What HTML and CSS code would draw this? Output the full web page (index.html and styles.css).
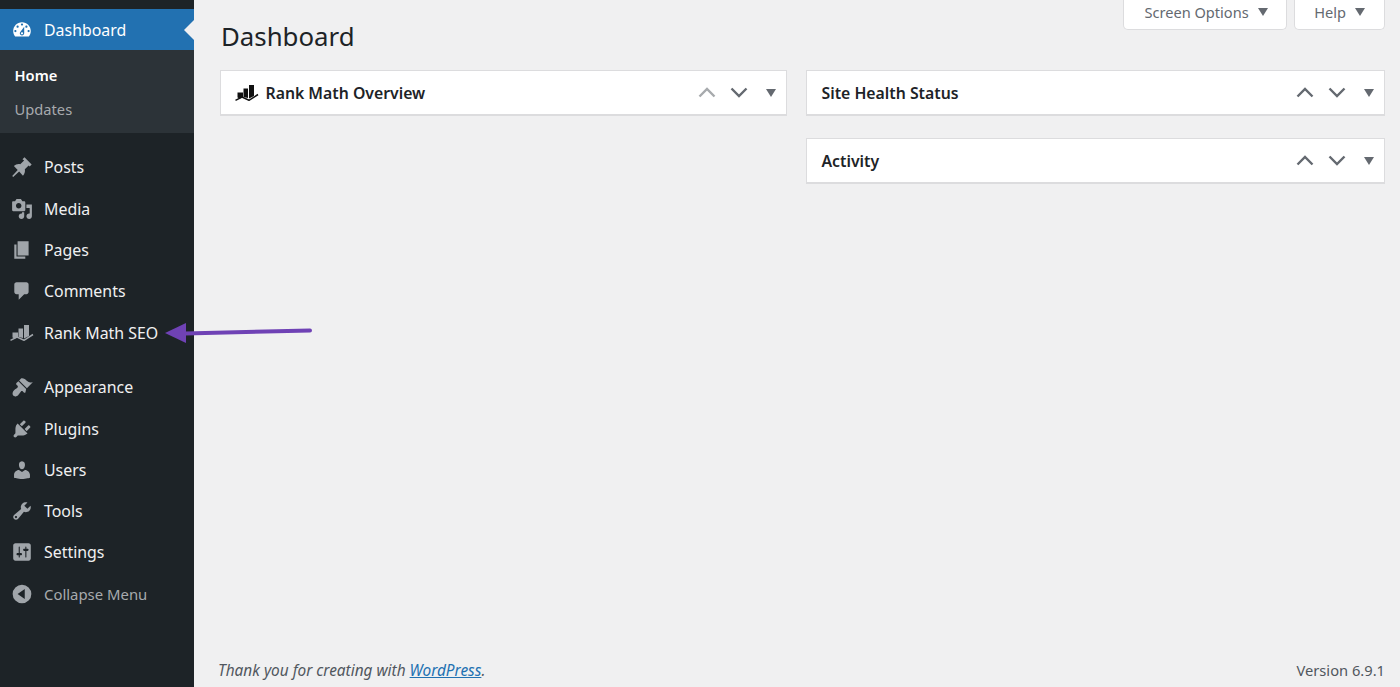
FILE: index.html
```html
<!DOCTYPE html>
<html lang="en">
<head>
<meta charset="utf-8">
<title>Dashboard</title>
<link rel="stylesheet" href="styles.css">
</head>
<body>
<div class="page">
  <aside class="sidebar">
    <nav class="menu">
      <a class="item current"><svg class="ic" viewBox="0 0 20 20"><path fill-rule="evenodd" d="M3.76 16h12.48c1.1-1.37 1.76-3.11 1.76-5 0-4.42-3.58-8-8-8s-8 3.58-8 8c0 1.89.66 3.63 1.76 5zM10 4c.55 0 1 .45 1 1s-.45 1-1 1-1-.45-1-1 .45-1 1-1zM6 6c.55 0 1 .45 1 1s-.45 1-1 1-1-.45-1-1 .45-1 1-1zm8 0c.55 0 1 .45 1 1s-.45 1-1 1-1-.45-1-1 .45-1 1-1zm-5.37 5.55L12 7v6c0 1.1-.9 2-2 2s-2-.9-2-2c0-.57.24-1.08.63-1.45zM4 10c.55 0 1 .45 1 1s-.45 1-1 1-1-.45-1-1 .45-1 1-1zm12 0c.55 0 1 .45 1 1s-.45 1-1 1-1-.45-1-1 .45-1 1-1zm-5 3c0-.55-.45-1-1-1s-1 .45-1 1 .45 1 1 1 1-.45 1-1z"/></svg><span>Dashboard</span></a>
      <div class="submenu">
        <a class="sub active">Home</a>
        <a class="sub">Updates</a>
      </div>
      <div class="group">
        <a class="item"><svg class="ic" viewBox="0 0 20 20"><path d="M10.44 3.02l1.82-1.82 6.53 6.53-1.81 1.82-.91-.91-3.5 3.5c.46 2.03-.1 4.2-1.7 5.8L7.4 14 2 19l-.9-.9 5-5.4L2.6 9.2c1.6-1.6 3.77-2.16 5.8-1.7l3.5-3.5z"/></svg><span>Posts</span></a>
        <a class="item"><svg class="ic" viewBox="0 0 20 20"><path fill-rule="evenodd" d="M13 11V4c0-.55-.45-1-1-1h-1.67L9 1H5L3.67 3H2c-.55 0-1 .45-1 1v7c0 .55.45 1 1 1h10c.55 0 1-.45 1-1zM7 4.5c1.38 0 2.5 1.12 2.5 2.5S8.38 9.5 7 9.5 4.5 8.38 4.5 7 5.62 4.5 7 4.5zM14 6h5v10.5c0 1.38-1.12 2.5-2.5 2.5S14 17.88 14 16.5s1.12-2.5 2.5-2.5c.17 0 .34.02.5.05V9h-3V6zm-4 8.05V13h2v3.5c0 1.38-1.12 2.5-2.5 2.5S7 17.88 7 16.5 8.12 14 9.5 14c.17 0 .34.02.5.05z"/></svg><span>Media</span></a>
        <a class="item"><svg class="ic" viewBox="0 0 20 20"><path d="M6 15V2h10v13H6zm-1 1h8v2H3V5h2v11z"/></svg><span>Pages</span></a>
        <a class="item"><svg class="ic" viewBox="0 0 20 20"><path d="M5 2h9c1.1 0 2 .9 2 2v7c0 1.1-.9 2-2 2h-2l-5 5v-5H5c-1.1 0-2-.9-2-2V4c0-1.1.9-2 2-2z"/></svg><span>Comments</span></a>
        <a class="item"><svg class="ic ic-rm" viewBox="0 0 24 16"><path d="M2.500 7.500h5.500v5l-3.500 1-2-1zM8.500 3.500h4.500v9.500l-4.500-1zM14 0h5v11l-5 2.500z"/><path class="rm-line" d="M.5 15.300L7 12l7 3.300L23 9.500"/></svg><span>Rank Math SEO</span></a>
      </div>
      <div class="group">
        <a class="item"><svg class="ic" viewBox="0 0 20 20"><path d="M14.48 11.06L7.41 3.99l1.5-1.5c.5-.56 2.3-.47 3.51.32 1.21.8 1.43 1.28 2.91 2.1 1.18.64 2.45 1.26 4.45.85zm-.71.71L6.7 4.7 4.93 6.47c-.39.39-.39 1.02 0 1.41l1.06 1.06c.39.39.39 1.03 0 1.42-.6.6-1.43 1.11-2.21 1.69-.35.26-.7.53-1.01.84-1.44 1.44-1.8 3.5-.8 4.9 1.1 1.2 3.2.9 4.7-.6.3-.3.57-.66.84-1.01.58-.78 1.09-1.61 1.69-2.21.39-.39 1.03-.39 1.42 0l1.06 1.06c.39.39 1.02.39 1.41 0z"/></svg><span>Appearance</span></a>
        <a class="item"><svg class="ic" viewBox="0 0 20 20"><path d="M13.11 4.36L9.87 7.6 8 5.73l3.24-3.24c.35-.34 1.05-.2 1.56.32.52.51.66 1.21.31 1.55zm-8 1.77l.91-1.12 9.01 9.01-1.19.84c-.71.71-2.63 1.16-3.82 1.16H6.14L4.9 17.26c-.59.59-1.54.59-2.12 0-.59-.58-.59-1.53 0-2.12l1.24-1.24v-3.88c0-1.13.4-3.19 1.09-3.89zm7.26 3.97l3.24-3.24c.34-.35 1.04-.21 1.55.31.52.51.66 1.21.31 1.55l-3.24 3.25z"/></svg><span>Plugins</span></a>
        <a class="item"><svg class="ic" viewBox="0 0 20 20"><path d="M10 9.25c-2.27 0-2.73-3.44-2.73-3.44C7 4.02 7.82 2 9.97 2c2.16 0 2.98 2.02 2.71 3.81 0 0-.41 3.44-2.68 3.44zm0 2.57L12.72 10c2.39 0 4.52 2.33 4.52 4.53v2.49s-3.65 1.13-7.24 1.13c-3.65 0-7.24-1.13-7.24-1.13v-2.49c0-2.25 1.94-4.48 4.47-4.48z"/></svg><span>Users</span></a>
        <a class="item"><svg class="ic" viewBox="0 0 20 20"><path fill-rule="evenodd" d="M16.68 9.77c-1.34 1.34-3.3 1.67-4.95.99l-5.41 6.52c-.99.99-2.59.99-3.58 0s-.99-2.59 0-3.57l6.52-5.42c-.68-1.65-.35-3.61.99-4.95 1.28-1.28 3.12-1.62 4.72-1.06l-2.89 2.89 2.82 2.82 2.86-2.87c.53 1.58.18 3.39-1.08 4.65zM3.81 16.21c.4.39 1.04.39 1.43 0 .4-.4.4-1.04 0-1.43-.39-.4-1.03-.4-1.43 0-.39.39-.39 1.03 0 1.43z"/></svg><span>Tools</span></a>
        <a class="item"><svg class="ic" viewBox="0 0 20 20"><path fill-rule="evenodd" d="M18 16V4c0-1.1-.9-2-2-2H4c-1.100 0-2 .9-2 2v12c0 1.100.9 2 2 2h12c1.100 0 2-.9 2-2zM8 11h1c.55 0 1 .45 1 1s-.45 1-1 1H8v1.500c0 .28-.22.5-.5.5s-.5-.22-.5-.5V13H6c-.55 0-1-.45-1-1s.45-1 1-1h1V5.500c0-.28.22-.5.5-.5s.5.22.5.5V11zm5-2h-1c-.55 0-1-.45-1-1s.45-1 1-1h1V5.500c0-.28.22-.5.5-.5s.5.22.5.5V7h1c.55 0 1 .45 1 1s-.45 1-1 1h-1v5.500c0 .28-.22.5-.5.5s-.5-.22-.5-.5V9z"/></svg><span>Settings</span></a>
        <a class="item collapse"><svg class="ic" viewBox="0 0 20 20"><path fill-rule="evenodd" d="M10 1.500a8.500 8.500 0 1 0 0 17 8.500 8.500 0 0 0 0-17zM12.500 5.500v9L6 10z"/></svg><span>Collapse Menu</span></a>
      </div>
    </nav>
  </aside>
  <main class="content">
    <header class="top">
      <h1 class="title">Dashboard</h1>
      <div class="meta">
        <button class="tab">Screen Options<i class="tri tri-meta"></i></button>
        <button class="tab tab-help">Help<i class="tri tri-meta"></i></button>
      </div>
    </header>
    <section class="boxes">
      <div class="col">
        <div class="box">
          <h2 class="box-title"><svg class="rm-dark" viewBox="0 0 24 16"><path d="M2.500 7.500h5.500v5l-3.500 1-2-1zM8.500 3.500h4.500v9.500l-4.500-1zM14 0h5v11l-5 2.500z"/><path class="rm-line" d="M.5 15.300L7 12l7 3.300L23 9.500"/></svg>Rank Math Overview</h2>
          <div class="controls">
            <svg class="chev off" viewBox="0 0 18 11"><path d="M1.500 9.500L9 2l7.500 7.500"/></svg>
            <svg class="chev" viewBox="0 0 18 11"><path d="M1.500 1.500L9 9l7.500-7.500"/></svg>
            <i class="tri"></i>
          </div>
        </div>
      </div>
      <div class="col">
        <div class="box">
          <h2 class="box-title">Site Health Status</h2>
          <div class="controls">
            <svg class="chev" viewBox="0 0 18 11"><path d="M1.500 9.500L9 2l7.500 7.500"/></svg>
            <svg class="chev" viewBox="0 0 18 11"><path d="M1.500 1.500L9 9l7.500-7.500"/></svg>
            <i class="tri"></i>
          </div>
        </div>
        <div class="box">
          <h2 class="box-title">Activity</h2>
          <div class="controls">
            <svg class="chev" viewBox="0 0 18 11"><path d="M1.500 9.500L9 2l7.500 7.500"/></svg>
            <svg class="chev" viewBox="0 0 18 11"><path d="M1.500 1.500L9 9l7.500-7.500"/></svg>
            <i class="tri"></i>
          </div>
        </div>
      </div>
    </section>
    <footer class="foot">
      <p class="thanks">Thank you for creating with <a class="wp">WordPress</a>.</p>
      <p class="version">Version 6.9.1</p>
    </footer>
  </main>
  <svg class="pointer" viewBox="0 0 150 22"><path class="pointer-line" d="M20 12.500L145 9.500"/><path class="pointer-head" d="M0 12L21 2v20z"/></svg>
</div>
</body>
</html>
```

FILE: styles.css
```css
* { box-sizing: border-box; }
html, body { margin: 0; height: 100%; }
body { background: #f0f0f1; font-family: "Noto Sans", "Open Sans", sans-serif; color: #1d2327; overflow: hidden; }
.page { position: relative; display: flex; height: 687px; overflow: hidden; }

.sidebar { width: 194px; flex: none; background: #1d2327; }
.menu { padding-top: 9px; display: flex; flex-direction: column; }
.item { position: relative; display: flex; align-items: center; height: 41.3px; padding-left: 11px; color: #f0f0f1; font-size: 15.900px; }
.item span { margin-left: 11px; }
.ic { width: 22px; height: 22px; flex: none; fill: #a0a5aa; }
.ic-rm { height: 16px; width: 24px; margin-left: -1px; margin-right: -1px; }
.rm-line { fill: none; stroke: #a0a5aa; stroke-width: 1.500px; }
.current { background: #2271b1; color: #fff; }
.current .ic { fill: #fff; }
.current::after { content: ""; position: absolute; right: 0; top: 50%; margin-top: -10px; border: 10px solid transparent; border-right-color: #f0f0f1; border-left-width: 0; }
.submenu { background: #2c3338; height: 83px; padding-top: 7px; display: flex; flex-direction: column; }
.sub { height: 34.500px; display: flex; align-items: center; padding-left: 14.500px; font-size: 14.700px; color: #a7aaad; }
.sub.active { color: #fff; font-weight: 600; }
.group { padding-top: 13.400px; display: flex; flex-direction: column; }
.collapse { color: #a7aaad; font-size: 14.900px; }

.content { flex: 1; min-width: 0; display: flex; flex-direction: column; padding: 0 15px 0 26px; }
.top { height: 70px; flex: none; display: flex; justify-content: space-between; align-items: flex-start; }
.title { margin: 17px 0 0 1px; font-size: 25.800px; line-height: 38px; font-weight: 400; color: #1d2327; }
.meta { display: flex; gap: 7.500px; }
.tab { height: 30px; padding: 0 18px 6px 20px; display: flex; align-items: center; background: #fff; border: 1px solid #dcdcde; border-top: 0; border-radius: 0 0 5px 5px; font: inherit; font-size: 14.600px; color: #646970; }
.tab-help { padding-left: 19px; padding-right: 19px; }
.tri { display: block; width: 0; height: 0; border: 5.500px solid transparent; border-top: 8px solid #646970; border-bottom: 0; }
.tri-meta { margin-left: 9px; }

.boxes { display: grid; grid-template-columns: 567px 1fr; column-gap: 19px; }
.col { display: flex; flex-direction: column; gap: 22.500px; }
.box { height: 45.500px; display: flex; align-items: center; justify-content: space-between; background: #fff; border: 1px solid #dcdcde; border-bottom-width: 2px; padding: 0 10px 0 14.500px; }
.box-title { margin: 2px 0 0; display: flex; align-items: center; font-size: 15.800px; font-weight: 600; color: #1d2327; }
.rm-dark { width: 24px; height: 16px; margin-left: -1px; margin-right: 7px; fill: #111; }
.rm-dark .rm-line { stroke: #111; }
.controls { display: flex; align-items: center; }
.chev { width: 18px; height: 11px; margin-right: 14px; fill: none; stroke: #646970; stroke-width: 2.400px; }
.chev.off { stroke: #a7aaad; }
.controls .tri { margin-left: 4px; margin-top: 1px; }

.foot { margin-top: auto; height: 33px; display: flex; justify-content: space-between; margin-left: -2px; color: #50575e; line-height: 33px; }
.foot p { margin: 0; }
.thanks { font-style: italic; font-size: 15.400px; }
.version { font-size: 14.700px; }
.wp { color: #2271b1; text-decoration: underline; }

.pointer { position: absolute; left: 165px; top: 321px; width: 150px; height: 22px; }
.pointer-line { fill: none; stroke: #6f42b5; stroke-width: 4px; stroke-linecap: round; }
.pointer-head { fill: #6f42b5; }
```
